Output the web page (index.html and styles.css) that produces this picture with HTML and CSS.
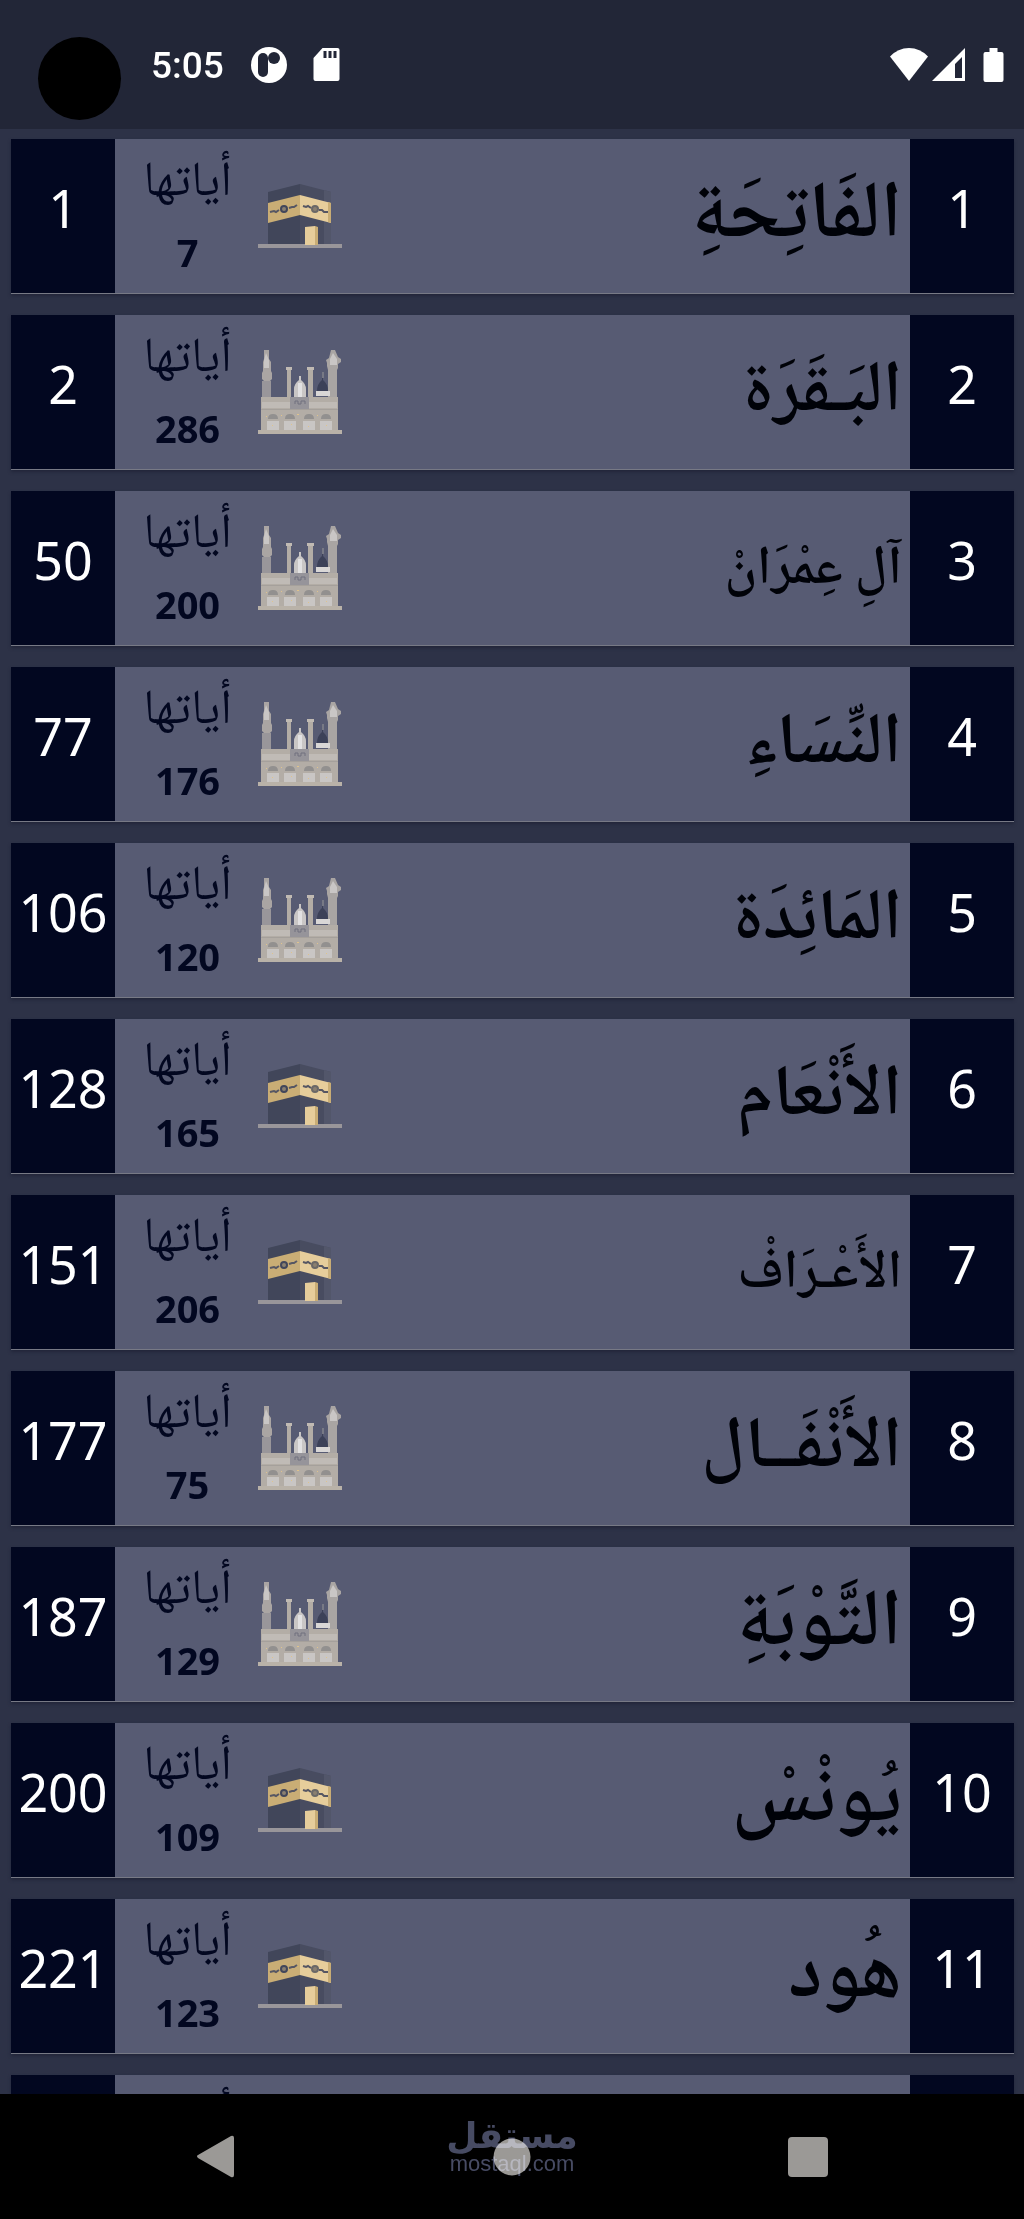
FILE: index.html
```html
<!DOCTYPE html>
<html lang="ar" dir="rtl">
<head>
<meta charset="utf-8">
<meta name="viewport" content="width=device-width, initial-scale=1">
<title>فهرس السور</title>
<link rel="stylesheet" href="styles.css">
</head>
<body>
<svg class="sprite" aria-hidden="true">
  <symbol id="makki" viewBox="0 0 84 84">
    <path fill="#41465a" d="M10 18 42 10V70H10z"/>
    <path fill="#484c60" d="M42 10 73 18V70H42z"/>
    <path fill="#52566a" d="M66 16 73 18V70H66z"/>
    <path fill="#c9ad75" d="M10 29 42 21V41L10 49z"/>
    <path fill="#e6cd9b" d="M42 21 73 29V49L42 41z"/>
    <path fill="#c9ad75" d="M70 28 73 29V49L70 48z"/>
    <circle cx="26" cy="35" r="3" fill="#8b8070" stroke="#41465a" stroke-width="2"/>
    <circle cx="57" cy="35" r="3" fill="#8b8070" stroke="#6a6867" stroke-width="2"/>
    <path fill="none" stroke="#565663" stroke-width="2" d="M12 38l4-1 2 1 3-2M31 34l3-1 2 0 3-2M45 32l3 1 2-1 3 2M61 36l3 0 2 2 4 0"/>
    <path fill="#e6cd9b" d="M47 53 57 52V71H47z"/>
    <path fill="#c9ad75" d="M57 52 60 53V71H57z"/>
    <path fill="#99969a" d="M0 70H47V71H60V70H84V74H0z"/>
  </symbol>
  <symbol id="madani" viewBox="0 0 84 84">
    <path fill="#99969a" d="M4 31h9v17H4z"/>
    <path fill="#aaa5a3" d="M6 0h5v9l2 3v9l1 2v6l-2 2H6l-2-2v-6l1-2v-9l1-3z"/>
    <path fill="#c9c6c5" d="M8 3l3 7v8H6v-8z"/>
    <path fill="#b3ada6" d="M29 17h4v31h-4zM50 17h5v31h-5z"/>
    <path fill="#c0bab3" d="M28 17h6v3h-6zM49 17h7v3h-7z"/>
    <path fill="#a9a5a3" d="M73 0h4l3 7 3 2v3l-3 2v4l-1 2v28h-9V20l-1-4v-3l-1-3 3-2z"/>
    <path fill="#c9c6c5" d="M75 3l4 6v6h-7V9z"/>
    <path fill="#c9c6c5" d="M41 26h2v4q5 4 5 9v8H36v-8q0-5 5-9z"/>
    <path fill="#e2e1e2" d="M40 33h4v14h-4z"/>
    <path fill="#3c4158" d="M64 25h1v5q5 4 5 11H59q0-7 5-11z"/>
    <path fill="#777985" d="M64 22h2v6h-2z"/>
    <path fill="#d9d7d6" d="M58 41h14v5H58z"/>
    <path fill="#b3ada6" d="M3 47h77v33H3z"/>
    <path fill="#c0bbb6" d="M4 52h75v6H4z"/>
    <path fill="#96949a" d="M32 47h19v12H32z"/>
    <path fill="none" stroke="#71717f" d="M37 54v-3h3v3h3v-3h4v3"/>
    <path fill="#a5a09b" d="M3 59h77v1H3z"/>
    <path fill="#92908f" d="M10 69q0-5 5-5t5 5zM27 69q0-5 5-5t5 5zM46 69q0-5 5-5t5 5zM63 69q0-5 5-5t5 5z"/>
    <path fill="#c9c6c4" d="M9 71h12v9H9zM26 71h12v9H26zM45 71h12v9H45zM62 71h12v9H62z"/>
    <path fill="#dfc38c" d="M8 66h1v1H8zM23 65h1v1h-1zM39 64h2v1h-2zM59 65h1v1h-1zM14 75h1v1h-1zM33 74h1v1h-1zM50 76h1v1h-1zM68 75h1v1h-1z"/>
    <path fill="#b9b2a8" d="M0 80h84v4H0z"/>
  </symbol>
</svg>
<div class="app">
  <header class="status">
    <span class="camera"></span>
    <time class="clock">5:05</time>
    <svg class="ic-app" viewBox="0 0 36 36" aria-hidden="true"><circle cx="18" cy="18" r="18" fill="#fff"/><rect x="7" y="6" width="10" height="24" rx="5" fill="#222637"/><circle cx="23" cy="11" r="6" fill="#222637"/></svg>
    <svg class="ic-card" viewBox="0 0 26 33" aria-hidden="true"><path fill="#fff" d="M9 0H24q2 0 2 2V31q0 2-2 2H2q-2 0-2-2V10z"/><path fill="#222637" d="M10 3h3v7h-3zM15 3h3v7h-3zM20 3h3v7h-3z"/></svg>
    <span class="grow"></span>
    <svg class="ic-wifi" viewBox="0 0 38 33" aria-hidden="true"><path fill="#fff" d="M0 8.500Q8 0 19 0T38 8.500L19 33z"/></svg>
    <svg class="ic-signal" viewBox="0 0 33 33" aria-hidden="true"><path fill="#fff" fill-rule="evenodd" d="M33 0V33H0zM30 9 23 16V30H30z"/></svg>
    <svg class="ic-battery" viewBox="0 0 20 34" aria-hidden="true"><path fill="#fff" d="M6 0h8v4h4q2 0 2 2v26q0 2-2 2H2q-2 0-2-2V6q0-2 2-2h4z"/></svg>
  </header>
  <main class="list-wrap">
    <ol class="list">
      <li class="row"><span class="num">1</span><span class="name large">الفَاتِحَةِ</span><svg class="place"><use href="#makki"/></svg><span class="ayat"><span class="label">أياتها</span><b class="count">7</b></span><span class="num">1</span></li>
      <li class="row"><span class="num">2</span><span class="name">البَـقَرَة</span><svg class="place"><use href="#madani"/></svg><span class="ayat"><span class="label">أياتها</span><b class="count">286</b></span><span class="num">2</span></li>
      <li class="row"><span class="num">3</span><span class="name small">آلِ عِمْرَانْ</span><svg class="place"><use href="#madani"/></svg><span class="ayat"><span class="label">أياتها</span><b class="count">200</b></span><span class="num">50</span></li>
      <li class="row"><span class="num">4</span><span class="name">النِّسَاءِ</span><svg class="place"><use href="#madani"/></svg><span class="ayat"><span class="label">أياتها</span><b class="count">176</b></span><span class="num">77</span></li>
      <li class="row"><span class="num">5</span><span class="name">المَائِدَة</span><svg class="place"><use href="#madani"/></svg><span class="ayat"><span class="label">أياتها</span><b class="count">120</b></span><span class="num">106</span></li>
      <li class="row"><span class="num">6</span><span class="name">الأَنْعَام</span><svg class="place"><use href="#makki"/></svg><span class="ayat"><span class="label">أياتها</span><b class="count">165</b></span><span class="num">128</span></li>
      <li class="row"><span class="num">7</span><span class="name small">الأَعْـرَافْ</span><svg class="place"><use href="#makki"/></svg><span class="ayat"><span class="label">أياتها</span><b class="count">206</b></span><span class="num">151</span></li>
      <li class="row"><span class="num">8</span><span class="name">الأَنْفَــال</span><svg class="place"><use href="#madani"/></svg><span class="ayat"><span class="label">أياتها</span><b class="count">75</b></span><span class="num">177</span></li>
      <li class="row"><span class="num">9</span><span class="name large">التَّوْبَةِ</span><svg class="place"><use href="#madani"/></svg><span class="ayat"><span class="label">أياتها</span><b class="count">129</b></span><span class="num">187</span></li>
      <li class="row"><span class="num">10</span><span class="name large">يُونْسْ</span><svg class="place"><use href="#makki"/></svg><span class="ayat"><span class="label">أياتها</span><b class="count">109</b></span><span class="num">200</span></li>
      <li class="row"><span class="num">11</span><span class="name large">هُود</span><svg class="place"><use href="#makki"/></svg><span class="ayat"><span class="label">أياتها</span><b class="count">123</b></span><span class="num">221</span></li>
      <li class="row"><span class="num"></span><span class="name"></span><svg class="place"></svg><span class="ayat"><span class="label">أياتها</span></span><span class="num"></span></li>
    </ol>
  </main>
  <nav class="navbar">
    <button class="key" aria-label="رجوع"><svg class="k-back" viewBox="0 0 37 43"><path fill="#9b9996" d="M1 20 34 1q3-1 3 2V40q0 3-3 2L1 23q-2-2 0-3z"/></svg></button>
    <button class="key" aria-label="الرئيسية"><svg class="k-home" viewBox="0 0 38 38"><circle cx="19" cy="19" r="18.500" fill="#9b9996"/></svg></button>
    <button class="key" aria-label="التطبيقات"><svg class="k-apps" viewBox="0 0 40 40"><rect width="40" height="40" rx="4" fill="#9b9996"/></svg></button>
    <span class="mark"><span class="mark-ar">مستقل</span><span class="mark-en">mostaql.com</span></span>
  </nav>
</div>
</body>
</html>
```
FILE: styles.css
```css
* { box-sizing: border-box; }
body { margin: 0; background: #2d3247; font-family: "Noto Sans", "Noto Naskh Arabic", "Noto Sans Arabic", "DejaVu Sans", sans-serif; }
.sprite { position: absolute; width: 0; height: 0; }
.app { display: flex; flex-direction: column; height: 100vh; }

.status { position: relative; direction: ltr; flex: none; display: flex; align-items: center; height: 129px; padding: 0 20px 0 151px; background: #222637; }
.camera { position: absolute; left: 38px; top: 37px; width: 83px; height: 83px; border-radius: 50%; background: #000; }
.clock { color: #fff; font: 500 37px/44px Roboto, sans-serif; padding-top: 2px; margin-right: 27px; }
.ic-app { width: 36px; height: 36px; margin-right: 26px; }
.ic-card { width: 27px; height: 33px; }
.grow { flex: 1; }
.ic-wifi { width: 38px; height: 33px; margin-right: 4px; }
.ic-signal { width: 33px; height: 33px; margin-right: 18px; }
.ic-battery { width: 21px; height: 34px; }

.list-wrap { flex: 1; min-height: 0; overflow: hidden; padding: 10px 10px 0 11px; }
.list { margin: 0; padding: 0; list-style: none; display: flex; flex-direction: column; gap: 21px; }
.row { display: grid; grid-template-columns: 104px 1fr 84px 143px 104px; align-items: center; height: 155px; background: #575b73; border-bottom: 1px solid #777985; box-shadow: 0 2px 3px #22263a; }
.num { align-self: stretch; background: #020720; color: #fff; font-size: 52px; line-height: 138px; text-align: center; }
.name { padding: 6px 8px 0 0; color: #000208; font-family: "Noto Naskh Arabic", Amiri, "DejaVu Sans", serif; font-size: 72px; font-weight: 600; line-height: 100px; white-space: nowrap; }
.name.large { font-size: 80px; }
.name.small { font-size: 54px; }
.place { width: 84px; height: 84px; }
.ayat { align-self: start; display: flex; flex-direction: column; align-items: center; color: #020720; padding-left: 2px; }
.label { font-size: 49px; line-height: 74px; }
.count { font-size: 38px; line-height: 78px; }

.navbar { position: relative; direction: ltr; flex: none; display: flex; justify-content: space-between; align-items: center; height: 125px; padding: 0 196px 0 196px; background: #000; }
.key { display: flex; padding: 0; border: 0; background: none; }
.k-back { width: 39px; height: 43px; }
.k-home { width: 38px; height: 38px; }
.k-apps { width: 40px; height: 40px; }
.mark { position: absolute; inset: 24px 0 0; display: flex; flex-direction: column; align-items: center; color: #474b63; mix-blend-mode: screen; pointer-events: none; }
.mark-ar { font: bold 36px/36px "DejaVu Sans", sans-serif; }
.mark-en { font: 22px/20px "Liberation Sans", sans-serif; }
```
